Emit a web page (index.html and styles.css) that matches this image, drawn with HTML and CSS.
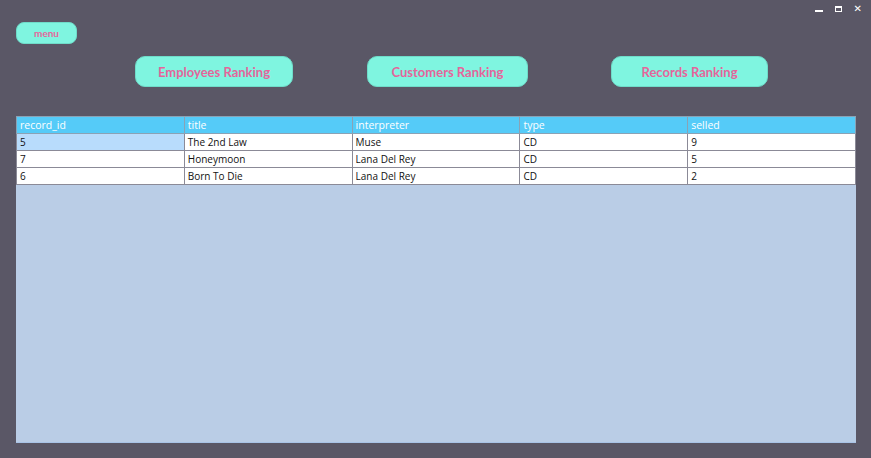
FILE: index.html
```html
<!DOCTYPE html>
<html lang="en">
<head>
    <meta charset="UTF-8">
    <title>Records Ranking</title>
    <link rel="stylesheet" href="styles.css">
</head>
<body>
    <div class="window">
        <div class="controls">
            <span class="ctl min"></span>
            <span class="ctl max"></span>
            <span class="ctl close">&#x2715;</span>
        </div>

        <div class="top">
            <button class="menu">menu</button>
        </div>

        <div class="rankings">
            <button class="rank">Employees Ranking</button>
            <button class="rank">Customers Ranking</button>
            <button class="rank">Records Ranking</button>
        </div>

        <div class="grid">
            <table>
                <thead>
                    <tr>
                        <th>record_id</th>
                        <th>title</th>
                        <th>interpreter</th>
                        <th>type</th>
                        <th>selled</th>
                    </tr>
                </thead>
                <tbody>
                    <tr>
                        <td class="selected">5</td>
                        <td>The 2nd Law</td>
                        <td>Muse</td>
                        <td>CD</td>
                        <td>9</td>
                    </tr>
                    <tr>
                        <td>7</td>
                        <td>Honeymoon</td>
                        <td>Lana Del Rey</td>
                        <td>CD</td>
                        <td>5</td>
                    </tr>
                    <tr>
                        <td>6</td>
                        <td>Born To Die</td>
                        <td>Lana Del Rey</td>
                        <td>CD</td>
                        <td>2</td>
                    </tr>
                </tbody>
            </table>
        </div>
    </div>
</body>
</html>
```

FILE: styles.css
```css
body {
    margin: 0;
    background-color: #5a5766;
    font-family: "Open Sans", sans-serif;
}

.window {
    height: 458px;
    padding: 22px 15px 0 16px;
    box-sizing: border-box;
    display: flex;
    flex-direction: column;
}

.controls {
    position: absolute;
    top: 3px;
    right: 9px;
    display: flex;
    align-items: center;
    gap: 12px;
    color: #fff;
}

.ctl {
    display: block;
}

.min {
    width: 8px;
    height: 2px;
    margin-top: 4px;
    background-color: #fff;
}

.max {
    width: 5px;
    height: 3px;
    border: 1px solid #fff;
    border-top-width: 2px;
}

.close {
    font-family: "DejaVu Sans", sans-serif;
    font-size: 10px;
    font-weight: bold;
    line-height: 12px;
}

.top {
    display: flex;
}

button {
    font-family: "Lato", sans-serif;
    font-weight: bold;
    color: #e4659b;
    background-color: #7ff5e0;
    border: 1px solid #6fdcc9;
    cursor: pointer;
}

.menu {
    width: 61px;
    height: 22px;
    border-radius: 8px;
    font-size: 10px;
    padding: 0;
}

.rankings {
    display: flex;
    margin-top: 12px;
    padding-left: 119px;
}

.rank {
    height: 31px;
    border-radius: 10px;
    font-size: 13px;
    padding: 0;
}

.rank:nth-child(1) {
    width: 158px;
}

.rank:nth-child(2) {
    width: 161px;
    margin-left: 74px;
}

.rank:nth-child(3) {
    width: 157px;
    margin-left: 83px;
}

.grid {
    margin-top: 29px;
    height: 326px;
    background-color: #bacde6;
    border-bottom: 1px solid #a9c3e6;
}

table {
    width: 840px;
    border-collapse: collapse;
    table-layout: fixed;
    font-size: 10px;
}

th, td {
    height: 16px;
    padding: 0 3px;
    text-align: left;
    white-space: nowrap;
    border: 1px solid #8b8a97;
}

th {
    background-color: #55cbf8;
    color: #fff;
    font-weight: normal;
    font-size: 10.5px;
    border-color: #8aa2b5;
}

td {
    background-color: #fff;
    color: #111;
}

td.selected {
    background-color: #b8dcfc;
}
```
